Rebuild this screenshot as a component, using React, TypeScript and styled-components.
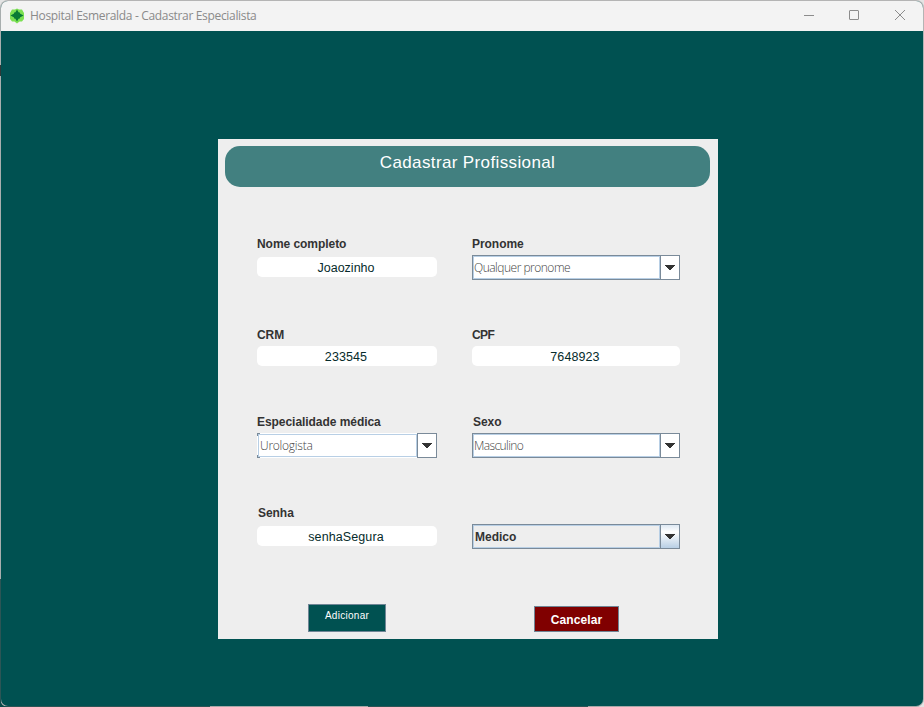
import React from "react";
import styled, { createGlobalStyle } from "styled-components";

const GlobalStyle = createGlobalStyle`
  * { box-sizing: border-box; }
  html, body { margin: 0; height: 100%; overflow: hidden; }
  body { background: linear-gradient(90deg, #0a4a4a 20px, transparent 20px) 0 579px no-repeat, #e4e4e4; }
`;

const Window = styled.div`
  width: 924px;
  height: 707px;
  display: flex;
  flex-direction: column;
  border: 1px solid transparent;
  border-radius: 8px;
  overflow: hidden;
  background:
    linear-gradient(#005151, #005151) padding-box,
    linear-gradient(#a8aeae 65px, #303838 65px 76px, #a8aeae 76px 579px, #2c5555 579px) 0 0 / 1px 100% no-repeat border-box,
    linear-gradient(90deg, #2c5555 210px, #a8a8a8 210px 368px, #2c5555 368px 588px, #a8a8a8 588px) 0 100% / 100% 1px no-repeat border-box,
    linear-gradient(#b4b4b4, #b4b4b4) border-box;
  font-family: "Liberation Sans", Arial, sans-serif;
`;

const TitleBar = styled.header`
  height: 30px;
  flex: none;
  display: flex;
  align-items: center;
  background: #f3f3f3;
  padding-left: 8px;
`;

const WindowTitle = styled.div`
  flex: 1;
  margin-left: 5px;
  font: 12px/16px "Open Sans", "Noto Sans", sans-serif;
  letter-spacing: -0.33px;
  color: #8a8a8a;
  white-space: nowrap;
`;

const WindowControls = styled.div`
  display: flex;
  height: 30px;
`;

const ControlButton = styled.button`
  width: 46px;
  height: 29px;
  padding: 0;
  border: 0;
  background: none;
  display: flex;
  align-items: center;
  justify-content: center;
`;

const Desktop = styled.main`
  flex: 1;
  padding: 108px 0 0 217px;
`;

const Card = styled.section`
  width: 500px;
  height: 500px;
  padding: 7px 8px 0 7px;
  background: #eeeeee;
`;

const CardHeader = styled.h1`
  margin: 0;
  height: 41px;
  border-radius: 15px;
  background: #428080;
  color: #ffffff;
  font-weight: 400;
  font-size: 17px;
  line-height: 33px;
  letter-spacing: 0.37px;
  text-align: center;
`;

const Form = styled.div`
  display: grid;
  grid-template-columns: 180px 208px;
  grid-template-rows: 91px 87px 91px 98px;
  column-gap: 35px;
  padding: 50px 0 0 32px;
`;

const Cell = styled.div<{ $gap: number }>`
  display: flex;
  flex-direction: column;
  gap: ${(p) => p.$gap}px;
`;

const Label = styled.label<{ $spacing?: number; $indent?: number }>`
  height: 14px;
  padding-left: ${(p) => p.$indent ?? 0}px;
  font-size: 12px;
  font-weight: 700;
  line-height: 14px;
  letter-spacing: ${(p) => p.$spacing ?? -0.05}px;
  color: #333333;
  white-space: nowrap;
`;

const TextField = styled.div<{ $spacing: number }>`
  height: 20px;
  border-radius: 5px;
  background: #ffffff;
  color: #062b2b;
  font-size: 12.5px;
  line-height: 22px;
  letter-spacing: ${(p) => p.$spacing}px;
  text-align: center;
  padding-right: 2px;
`;

const ComboFrame = styled.div<{ $raised?: boolean; $focused?: boolean }>`
  height: 25px;
  display: flex;
  border: 1px solid ${(p) => (p.$focused ? "#f4f6f7" : "#7a8a99")};
  border-right-width: 0;
  background: ${(p) => (p.$raised ? "#eeeeee" : "#ffffff")};
  ${(p) =>
    p.$focused &&
    `background:
      linear-gradient(#7a8a99, #7a8a99) 0 0 / 3px 1px no-repeat border-box,
      linear-gradient(#7a8a99, #7a8a99) 0 0 / 1px 3px no-repeat border-box,
      linear-gradient(#7a8a99, #7a8a99) 0 100% / 3px 1px no-repeat border-box,
      linear-gradient(#7a8a99, #7a8a99) 0 100% / 1px 3px no-repeat border-box,
      #ffffff;
    border-color: transparent;`}
`;

const ComboValue = styled.div<{ $raised?: boolean; $focused?: boolean; $spacing: number }>`
  flex: 1;
  border: 1px solid #b8cfe5;
  padding-left: ${(p) => (p.$raised || p.$focused ? 1 : 0)}px;
  font: ${(p) =>
    p.$raised
      ? '700 12px/22px "Liberation Sans", Arial, sans-serif'
      : '300 12px/22px "Open Sans", "Noto Sans", sans-serif'};
  letter-spacing: ${(p) => p.$spacing}px;
  color: ${(p) => (p.$raised ? "#333333" : "#444444")};
  white-space: nowrap;
`;

const ComboArrow = styled.div<{ $raised?: boolean }>`
  width: 20px;
  height: 25px;
  margin-top: -1px;
  border: 1px solid #7a8a99;
  display: flex;
  align-items: center;
  justify-content: center;
  background: ${(p) =>
    p.$raised ? "linear-gradient(#dde8f3, #ffffff 30%, #b8cfe5)" : "#ffffff"};
`;

const Actions = styled.footer`
  display: flex;
  align-items: flex-start;
  gap: 148px;
  padding-left: 83px;
`;

const ActionButton = styled.button<{ $danger?: boolean }>`
  width: ${(p) => (p.$danger ? 85 : 78)}px;
  height: ${(p) => (p.$danger ? 26 : 28)}px;
  margin-top: ${(p) => (p.$danger ? 2 : 0)}px;
  padding: ${(p) => (p.$danger ? "2px 0 0" : "0 0 5px")};
  border: 1px solid #6f8595;
  background: ${(p) => (p.$danger ? "#800000" : "#005151")};
  color: #ffffff;
  font-family: "Liberation Sans", Arial, sans-serif;
  font-size: ${(p) => (p.$danger ? 12 : 10)}px;
  font-weight: ${(p) => (p.$danger ? 700 : 400)};
  letter-spacing: ${(p) => (p.$danger ? 0.1 : 0.28)}px;
`;

const AppIcon = () => (
  <svg width="16" height="16" viewBox="0 0 16 16">
    <path d="M8 .5 10 1.5H13L15 5V11L13 13.5H10.5L8 15.5 5.5 13.5H3L1 11V5L3 1.5H6Z" fill="#7be052" />
    <path d="M8 1.5 10 5 14.5 7.5 10 10 8 13.5 6 10 1.5 7.5 6 5Z" fill="#087a35" />
    <path d="M5 4.5h6v6H5z" fill="#087a35" />
  </svg>
);

type ComboProps = { value: string; spacing: number; raised?: boolean; focused?: boolean };

const Combo = ({ value, spacing, raised, focused }: ComboProps) => (
  <ComboFrame $raised={raised} $focused={focused}>
    <ComboValue $raised={raised} $focused={focused} $spacing={spacing}>{value}</ComboValue>
    <ComboArrow $raised={raised}>
      <svg width="10" height="5" viewBox="0 0 10 5" shapeRendering="crispEdges">
        <path d="M0 0h10v1H9v1H8v1H7v1H6v1H4V4H3V3H2V2H1V1H0z" fill="#333333" />
      </svg>
    </ComboArrow>
  </ComboFrame>
);

export default function App() {
  return (
    <>
      <GlobalStyle />
      <Window>
        <TitleBar>
          <AppIcon />
          <WindowTitle>Hospital Esmeralda - Cadastrar Especialista</WindowTitle>
          <WindowControls>
            <ControlButton aria-label="Minimizar">
              <svg width="12" height="12" fill="none" stroke="#8c8c8c">
                <path d="M2 5.5h10" />
              </svg>
            </ControlButton>
            <ControlButton aria-label="Maximizar">
              <svg width="12" height="12" fill="none" stroke="#8c8c8c">
                <rect x="1.5" y=".5" width="9" height="9" rx=".5" />
              </svg>
            </ControlButton>
            <ControlButton aria-label="Fechar">
              <svg width="12" height="12" fill="none" stroke="#8c8c8c">
                <path d="m1 0 10 10M11 0 1 10" />
              </svg>
            </ControlButton>
          </WindowControls>
        </TitleBar>
        <Desktop>
          <Card>
            <CardHeader>Cadastrar Profissional</CardHeader>
            <Form>
              <Cell $gap={6}>
                <Label>Nome completo</Label>
                <TextField $spacing={0}>Joaozinho</TextField>
              </Cell>
              <Cell $gap={4}>
                <Label>Pronome</Label>
                <Combo value="Qualquer pronome" spacing={-0.5} />
              </Cell>
              <Cell $gap={4}>
                <Label>CRM</Label>
                <TextField $spacing={0.1}>233545</TextField>
              </Cell>
              <Cell $gap={4}>
                <Label $spacing={-0.6}>CPF</Label>
                <TextField $spacing={0.1}>7648923</TextField>
              </Cell>
              <Cell $gap={4}>
                <Label>Especialidade médica</Label>
                <Combo value="Urologista" spacing={-0.25} focused />
              </Cell>
              <Cell $gap={4}>
                <Label $indent={1}>Sexo</Label>
                <Combo value="Masculino" spacing={-0.6} />
              </Cell>
              <Cell $gap={6}>
                <Label $indent={1}>Senha</Label>
                <TextField $spacing={0.1}>senhaSegura</TextField>
              </Cell>
              <Cell $gap={4}>
                <Label />
                <Combo value="Medico" spacing={0} raised />
              </Cell>
            </Form>
            <Actions>
              <ActionButton>Adicionar</ActionButton>
              <ActionButton $danger>Cancelar</ActionButton>
            </Actions>
          </Card>
        </Desktop>
      </Window>
    </>
  );
}
